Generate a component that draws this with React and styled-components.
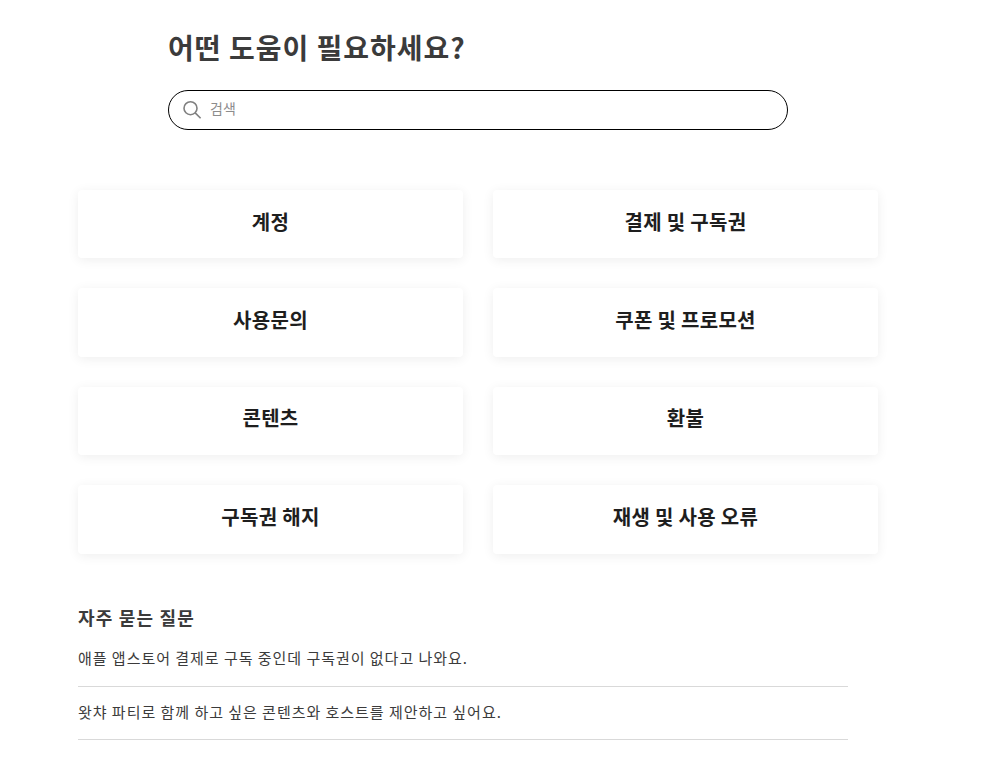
import styled, { createGlobalStyle } from 'styled-components';

const categories = [
  '계정',
  '결제 및 구독권',
  '사용문의',
  '쿠폰 및 프로모션',
  '콘텐츠',
  '환불',
  '구독권 해지',
  '재생 및 사용 오류',
];

const questions = [
  '애플 앱스토어 결제로 구독 중인데 구독권이 없다고 나와요.',
  '왓챠 파티로 함께 하고 싶은 콘텐츠와 호스트를 제안하고 싶어요.',
];

function App() {
  return (
    <Page>
      <GlobalStyle />
      <SearchSection>
        <Title>어떤 도움이 필요하세요?</Title>
        <SearchBox>
          <svg width="20" height="20" viewBox="0 0 20 20" fill="none" stroke="#808080" strokeWidth="1.6">
            <circle cx="7.5" cy="8.2" r="6.5" />
            <path d="M12.2 12.9L17.6 18.2" />
          </svg>
          <SearchInput placeholder="검색" />
        </SearchBox>
      </SearchSection>
      <CardGrid>
        {categories.map((name) => (
          <Card key={name}>{name}</Card>
        ))}
      </CardGrid>
      <FaqSection>
        <FaqTitle>자주 묻는 질문</FaqTitle>
        {questions.map((q) => (
          <FaqRow key={q}>{q}</FaqRow>
        ))}
      </FaqSection>
    </Page>
  );
}

const GlobalStyle = createGlobalStyle`
  html, body {
    margin: 0;
    background: #fff;
    font-family: "Noto Sans CJK KR", "Liberation Sans", sans-serif;
  }
`;

const Page = styled.div`
  width: 1003px;
  height: 767px;
  overflow: hidden;
  padding-left: 78px;
  box-sizing: border-box;
`;

const SearchSection = styled.div`
  padding: 27px 0 0 90px;
`;

const Title = styled.h1`
  margin: 0;
  font-size: 28px;
  line-height: 40px;
  font-weight: 700;
  letter-spacing: 1px;
  color: #3b3b3b;
`;

const SearchBox = styled.div`
  width: 620px;
  height: 40px;
  margin-top: 23px;
  box-sizing: border-box;
  border: 1px solid #000;
  border-radius: 20px;
  padding: 0 14px;
  display: flex;
  align-items: center;
  gap: 7px;
`;

const SearchInput = styled.input`
  flex: 1;
  border: 0;
  outline: 0;
  padding: 0 0 5px;
  font-family: inherit;
  font-size: 14px;
  background: transparent;

  &::placeholder {
    color: #8c8c8c;
    opacity: 1;
  }
`;

const CardGrid = styled.div`
  display: grid;
  grid-template-columns: 385px 385px;
  grid-auto-rows: 68.4px;
  gap: 30px;
  margin-top: 60px;
`;

const Card = styled.div`
  display: flex;
  align-items: center;
  justify-content: center;
  padding-bottom: 6px;
  box-sizing: border-box;
  background: #fff;
  border-radius: 4px;
  box-shadow: 0 2px 12px rgba(0, 0, 0, 0.07);
  font-size: 20px;
  font-weight: 700;
  letter-spacing: 0.3px;
  color: #1e1e1e;
`;

const FaqSection = styled.div`
  width: 770px;
  margin-top: 49px;
`;

const FaqTitle = styled.h2`
  margin: 0 0 3px;
  font-size: 18px;
  line-height: 28px;
  font-weight: 700;
  letter-spacing: 1.2px;
  color: #3b3b3b;
`;

const FaqRow = styled.div`
  font-size: 15px;
  letter-spacing: 0.97px;
  line-height: 20px;
  height: 53px;
  box-sizing: border-box;
  padding-top: 14px;
  border-bottom: 1px solid #d9d9d9;
  color: #3b3b3b;

  & + & {
    padding-top: 15px;
  }
`;

export default App;
